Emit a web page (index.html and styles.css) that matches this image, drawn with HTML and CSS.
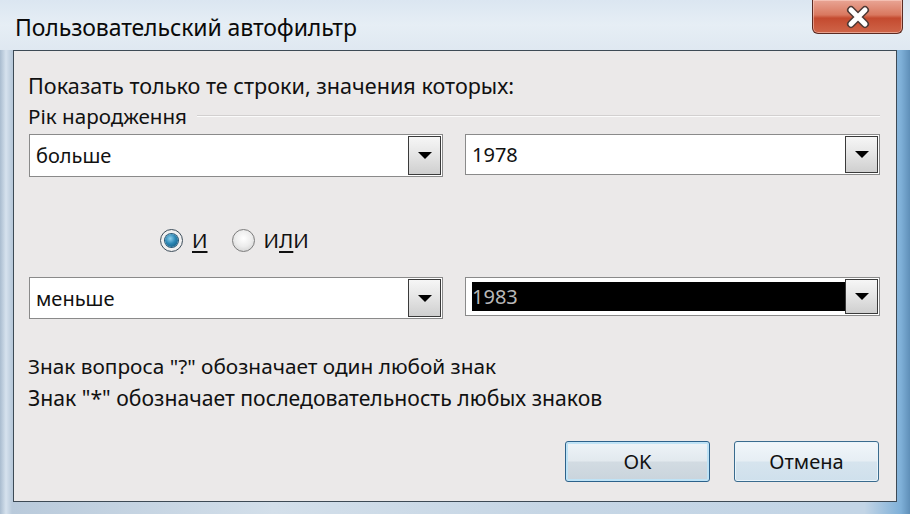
FILE: index.html
```html
<!DOCTYPE html>
<html lang="ru">
<head>
<meta charset="utf-8">
<title>Пользовательский автофильтр</title>
<link rel="stylesheet" href="styles.css">
</head>
<body>
<div class="window">
  <div class="titlebar">
    <div class="title">Пользовательский автофильтр</div>
    <div class="close">
      <svg width="32" height="24" viewBox="0 0 32 24">
        <path d="M9 5 L23 19 M23 5 L9 19" stroke="#4e3a36" stroke-width="8" stroke-linecap="round"/>
        <path d="M9 5 L23 19 M23 5 L9 19" stroke="#ffffff" stroke-width="5" stroke-linecap="round"/>
      </svg>
    </div>
  </div>
  <div class="client">
    <div class="heading">Показать только те строки, значения которых:</div>
    <div class="group">
      <span class="group-label">Рік народження</span>
      <span class="group-line"></span>
    </div>
    <div class="row row1">
      <div class="combo combo-left">
        <div class="combo-text">больше</div>
        <div class="combo-btn"><span class="arrow"></span></div>
      </div>
      <div class="combo combo-right">
        <div class="combo-text">1978</div>
        <div class="combo-btn"><span class="arrow"></span></div>
      </div>
    </div>
    <div class="radios">
      <label class="radio"><span class="dot checked"></span><span class="rlabel"><u>И</u></span></label>
      <label class="radio"><span class="dot"></span><span class="rlabel">И<u>Л</u>И</span></label>
    </div>
    <div class="row row2">
      <div class="combo combo-left">
        <div class="combo-text">меньше</div>
        <div class="combo-btn"><span class="arrow"></span></div>
      </div>
      <div class="combo combo-right combo-sel">
        <div class="combo-text"><span class="sel">1983</span></div>
        <div class="combo-btn"><span class="arrow"></span></div>
      </div>
    </div>
    <div class="hints">
      <div class="hint hint1">Знак вопроса "?" обозначает один любой знак</div>
      <div class="hint hint2">Знак "*" обозначает последовательность любых знаков</div>
    </div>
    <div class="buttons">
      <button class="btn btn-ok">OK</button>
      <button class="btn btn-cancel">Отмена</button>
    </div>
  </div>
</div>
</body>
</html>
```

FILE: styles.css
```css
* { box-sizing: border-box; }
html, body { margin: 0; padding: 0; }
body {
  width: 910px;
  height: 514px;
  overflow: hidden;
  font-family: "Noto Sans", "Open Sans", sans-serif;
  color: #111;
}
.window {
  width: 910px;
  height: 514px;
  display: flex;
  flex-direction: column;
  background:
    linear-gradient(90deg, #a9bccf 0px, #d6e2ee 6px, #b9cadb 12px, #d3dfea 30%, #c6d6e5 60%, #c3d5e6 95%, #7fb0d8 99%, #5f8fb8 100%);
}
.titlebar {
  height: 50px;
  display: flex;
  justify-content: space-between;
  align-items: flex-start;
  padding-left: 15px;
  background: linear-gradient(180deg, #dbe6f1 0%, #e6eef5 50%, #dfe8f1 100%);
}
.title {
  margin-top: 13px;
  font-size: 23px;
  letter-spacing: -0.1px;
  color: #0a0a0a;
  line-height: 28px;
}
.close {
  width: 91px;
  height: 34px;
  margin-right: 7px;
  border: 1px solid #5b2a22;
  border-top: none;
  border-radius: 0 0 6px 6px;
  background: linear-gradient(180deg, #e9a595 0%, #d9785f 45%, #c44a2f 55%, #cf6549 100%);
  box-shadow: inset 0 0 0 1px rgba(255,220,210,0.5);
  display: flex;
  align-items: center;
  justify-content: center;
}
.client {
  flex: 1;
  margin: 0 13px 12px 13px;
  border: 1px solid #3d4a55;
  background: #ebe9e9;
  padding: 0 0 0 14px;
  display: flex;
  flex-direction: column;
}
.heading {
  margin-top: 21px;
  font-size: 21.6px;
  line-height: 28px;
}
.group {
  display: flex;
  align-items: center;
  margin-top: 2px;
  padding-right: 16px;
}
.group-label {
  font-size: 20.6px;
  line-height: 28px;
}
.group-line {
  flex: 1;
  height: 2px;
  margin-left: 10px;
  border-top: 1px solid #d2d0d0;
  border-bottom: 1px solid #fbfbfb;
}
.row {
  display: flex;
  gap: 22px;
  padding-right: 16px;
}
.row1 { margin-top: 4px; }
.row2 { margin-top: 23px; }
.combo {
  display: flex;
  height: 43px;
  border: 1px solid #8a8a8a;
  background: #fff;
}
.combo-left { width: 415px; margin-left: 1px; }
.combo-right { width: 416px; height: 41px; }
.row2 .combo-left { height: 42px; }
.row2 .combo-right { height: 39px; }
.combo-text {
  flex: 1;
  display: flex;
  align-items: center;
  padding-left: 6px;
  font-size: 20px;
}
.combo-btn {
  width: 33px;
  margin: 1px 1px 1px 0;
  border: 1px solid #3a3a3a;
  background: linear-gradient(180deg, #f6f6f6 0%, #e6e6e6 45%, #cfcfcf 100%);
  display: flex;
  align-items: center;
  justify-content: center;
}
.arrow {
  width: 0;
  height: 0;
  border-left: 7px solid transparent;
  border-right: 7px solid transparent;
  border-top: 7px solid #000;
}
.combo-sel .combo-text { padding: 4px 0 4px 6px; }
.sel {
  flex: 1;
  align-self: stretch;
  background: #000;
  color: #b8b8b8;
  display: flex;
  align-items: center;
}
.radios {
  display: flex;
  gap: 24px;
  margin-top: 49px;
  margin-left: 132px;
  height: 28px;
  align-items: center;
}
.radio {
  display: flex;
  align-items: center;
  gap: 9px;
  font-size: 20.5px;
  line-height: 28px;
}
.rlabel u { text-decoration-thickness: 2px; text-underline-offset: 3px; }
.dot {
  width: 23px;
  height: 23px;
  border-radius: 50%;
  border: 1px solid #7c7c7c;
  background: radial-gradient(circle at 50% 40%, #ffffff 0%, #ececec 50%, #c9c9c9 100%);
  display: flex;
  align-items: center;
  justify-content: center;
}
.dot.checked {
  border-color: #3d4d5a;
  background: #f0f0f0;
}
.dot.checked::after {
  content: "";
  width: 13px;
  height: 13px;
  border-radius: 50%;
  background: radial-gradient(circle at 40% 35%, #8fd0ec 0%, #2b87b5 45%, #0d4f73 100%);
  box-shadow: 0 0 0 1px #2a5a78;
}
.hints {
  margin-top: 33px;
  display: flex;
  flex-direction: column;
  gap: 4px;
}
.hint {
  font-size: 20.8px;
  line-height: 28px;
}
.hint2 { font-size: 21.2px; }
.buttons {
  display: flex;
  justify-content: flex-end;
  gap: 24px;
  margin-top: 29px;
  padding-right: 17px;
}
.btn {
  width: 145px;
  height: 41px;
  font-family: "Noto Sans", "Open Sans", sans-serif;
  font-size: 20px;
  color: #111;
  border-radius: 3px;
  border: 1px solid #2c628b;
  background: linear-gradient(180deg, #eef4f8 0%, #e2e9ee 48%, #d2dbe2 52%, #c9d4dc 100%);
  box-shadow: inset 0 0 0 2px #bfe3f6;
  padding: 0;
}
.btn-cancel {
  border-color: #3a6b8e;
  background: linear-gradient(180deg, #f1f6fa 0%, #e6eef4 48%, #d6e4ee 52%, #cfe0ec 100%);
  box-shadow: inset 0 0 0 1px #e8f4fb;
}
```
